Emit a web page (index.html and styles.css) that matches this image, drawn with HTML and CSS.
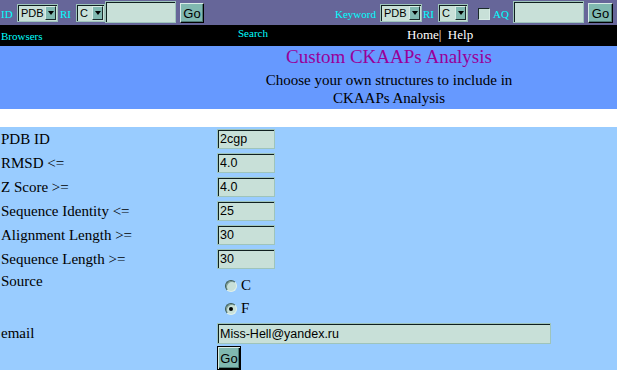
FILE: index.html
```html
<!DOCTYPE html>
<html>
<head>
<meta charset="utf-8">
<title>Custom CKAAPs Analysis</title>
<link rel="stylesheet" href="styles.css">
</head>
<body>
<div class="topbar">
  <span class="tl w-id">ID</span>
  <div class="sel w41"><span class="val">PDB</span><span class="arr"></span></div>
  <span class="tl w-ri ml2">RI</span>
  <div class="sel w29"><span class="val">C</span><span class="arr"></span></div>
  <input class="tin ml5" type="text" value="">
  <button class="go ml4 w24">Go</button>

  <span class="tl w-kw push">Keyword</span>
  <div class="sel w42"><span class="val">PDB</span><span class="arr"></span></div>
  <span class="tl w-ri2 ml1">RI</span>
  <div class="sel w30"><span class="val">C</span><span class="arr"></span></div>
  <span class="chk ml10"></span>
  <span class="tl w-aq ml3">AQ</span>
  <input class="tin" type="text" value="">
  <button class="go ml4 w25">Go</button>
</div>

<div class="navbar">
  <span class="browsers">Browsers</span>
  <span class="search">Search</span>
  <span class="nav">Home|&nbsp; Help</span>
</div>

<div class="head">
  <div class="hcol">
    <div class="title">Custom CKAAPs Analysis</div>
    <div class="sub">Choose your own structures to include in CKAAPs Analysis</div>
  </div>
</div>

<div class="gap"></div>

<form class="form">
  <label class="lbl">PDB ID</label>
  <div><input class="fin" type="text" value="2cgp"></div>

  <label class="lbl">RMSD &lt;=</label>
  <div><input class="fin" type="text" value="4.0"></div>

  <label class="lbl">Z Score &gt;=</label>
  <div><input class="fin" type="text" value="4.0"></div>

  <label class="lbl">Sequence Identity &lt;=</label>
  <div><input class="fin" type="text" value="25"></div>

  <label class="lbl">Alignment Length &gt;=</label>
  <div><input class="fin" type="text" value="30"></div>

  <label class="lbl">Sequence Length &gt;=</label>
  <div><input class="fin" type="text" value="30"></div>

  <label class="lbl top">Source</label>
  <div class="radios">
    <div class="rline"><span class="radio"></span><span class="rtext">C</span></div>
    <div class="rline"><span class="radio on"></span><span class="rtext">F</span></div>
  </div>

  <label class="lbl">email</label>
  <div><input class="fin email" type="text" value="Miss-Hell@yandex.ru"></div>

  <span></span>
  <div><button class="go big" type="button">Go</button></div>
</form>
</body>
</html>
```

FILE: styles.css
```css
* { box-sizing: border-box; }

body {
  margin: 0;
  background: #99ccff;
  font-family: "Liberation Serif", "Times New Roman", serif;
  color: #000;
}

/* ---------- top search bar ---------- */
.topbar {
  display: flex;
  align-items: flex-start;
  height: 25px;
  background: #666699;
  padding: 0 4px 0 1px;
}
.tl {
  color: #00ffff;
  font-size: 11px;
  line-height: 13px;
  margin-top: 8px;
  white-space: nowrap;
}
.w-id { width: 16px; }
.w-ri { width: 16px; }
.w-ri2 { width: 15px; }
.w-kw { width: 45px; }
.w-aq { width: 20px; }
.push { margin-left: auto; }
.ml1 { margin-left: 1px; }
.ml2 { margin-left: 2px; }
.ml3 { margin-left: 3px; }
.ml4 { margin-left: 4px; }
.ml5 { margin-left: 5px; }
.ml10 { margin-left: 10px; }
.w24 { width: 24px; }
.w25 { width: 25px; }
.w29 { width: 29px; }
.w30 { width: 30px; }
.w41 { width: 41px; }
.w42 { width: 42px; }

.sel {
  display: flex;
  height: 18px;
  margin-top: 4px;
  background: #c8e0d8;
  border: 1px solid #9ec4bb;
  box-shadow: inset 1px 1px 0 #102020;
  padding: 1px 1px 1px 1px;
}
.sel .val {
  flex: 1;
  font-family: "Liberation Sans", Arial, sans-serif;
  font-size: 11px;
  line-height: 14px;
  padding-left: 2px;
}
.sel .arr {
  width: 11px;
  background: #80b8b0;
  border-top: 1px solid #d8ece6;
  border-left: 1px solid #d8ece6;
  border-right: 1px solid #1a2a2a;
  border-bottom: 1px solid #1a2a2a;
  display: flex;
  align-items: center;
  justify-content: center;
}
.sel .arr::after {
  content: "";
  border-left: 3px solid transparent;
  border-right: 3px solid transparent;
  border-top: 4px solid #000;
}

.tin {
  width: 71px;
  height: 22px;
  margin: 1px 0 0 0;
  background: #c8e0d8;
  border: 1px solid #9ec4bb;
  box-shadow: inset 1px 1px 0 #102020;
  font-family: "Liberation Sans", Arial, sans-serif;
  font-size: 12.5px;
  padding: 0 2px;
}

.go {
  height: 20px;
  margin-top: 3px;
  padding: 0;
  background: #80b8b0;
  border: 1px solid;
  border-color: #d8ece6 #000 #000 #d8ece6;
  box-shadow: inset -1px -1px 0 #4e7c76;
  font-family: "Liberation Sans", Arial, sans-serif;
  font-size: 13px;
  color: #000;
}

.chk {
  width: 12px;
  height: 12px;
  margin-top: 8px;
  background: #c8e0d8;
  border: 1px solid;
  border-color: #1a2a2a #d8ece6 #d8ece6 #1a2a2a;
}

/* ---------- black nav bar ---------- */
.navbar {
  display: flex;
  align-items: flex-start;
  height: 21px;
  background: #000;
}
.browsers {
  width: 238px;
  padding: 5px 0 0 1px;
  color: #00ffff;
  font-size: 11px;
  line-height: 13px;
}
.search {
  width: 169px;
  padding-top: 2px;
  color: #00ffff;
  font-size: 11px;
  line-height: 13px;
}
.nav {
  padding-top: 2px;
  color: #fff;
  font-size: 13px;
  line-height: 15px;
  white-space: nowrap;
}

/* ---------- heading band ---------- */
.head {
  height: 63px;
  background: #6699ff;
  display: flex;
}
.hcol {
  margin-left: 254px;
  width: 270px;
  text-align: center;
}
.title {
  color: #990099;
  font-size: 19px;
  line-height: 22px;
}
.sub {
  margin-top: 3px;
  font-size: 15px;
  line-height: 18px;
}

.gap {
  height: 18px;
  background: #fff;
}

/* ---------- form ---------- */
.form {
  display: grid;
  grid-template-columns: 216px 400px;
  align-items: center;
  padding-left: 1px;
  margin: 0;
}
.lbl {
  font-size: 15px;
  line-height: 17px;
  white-space: nowrap;
}
.lbl.top {
  align-self: start;
  padding-top: 2px;
}
.fin {
  display: block;
  width: 58px;
  height: 20px;
  margin: 2px 0;
  background: #c8e0d8;
  border: 1px solid #9ec4bb;
  box-shadow: inset 1px 1px 0 #102020;
  font-family: "Liberation Sans", Arial, sans-serif;
  font-size: 12.5px;
  padding: 0 2px;
  color: #000;
}
.fin.email {
  width: 334px;
  height: 21px;
  margin: 3px 0 2px 0;
}

.radios {
  padding-top: 3px;
}
.rline {
  display: flex;
  align-items: center;
  height: 23px;
  padding-left: 8px;
}
.radio {
  width: 12px;
  height: 12px;
  border-radius: 50%;
  background: #c8e0d8;
  border: 1px solid;
  border-color: #3a5a54 #e0f0ea #e0f0ea #3a5a54;
  box-shadow: inset 1px 1px 0 #7a9a94;
  display: flex;
  align-items: center;
  justify-content: center;
}
.radio.on::after {
  content: "";
  width: 4px;
  height: 4px;
  border-radius: 50%;
  background: #000;
}
.rtext {
  margin-left: 4px;
  font-size: 15px;
  line-height: 17px;
}

.go.big {
  display: block;
  width: 24px;
  height: 24px;
  margin: 0;
  border: 1px solid #000;
  box-shadow: inset 1px 1px 0 #d8ece6, inset -1px -1px 0 #000, inset -2px -2px 0 #4e7c76;
}
```
